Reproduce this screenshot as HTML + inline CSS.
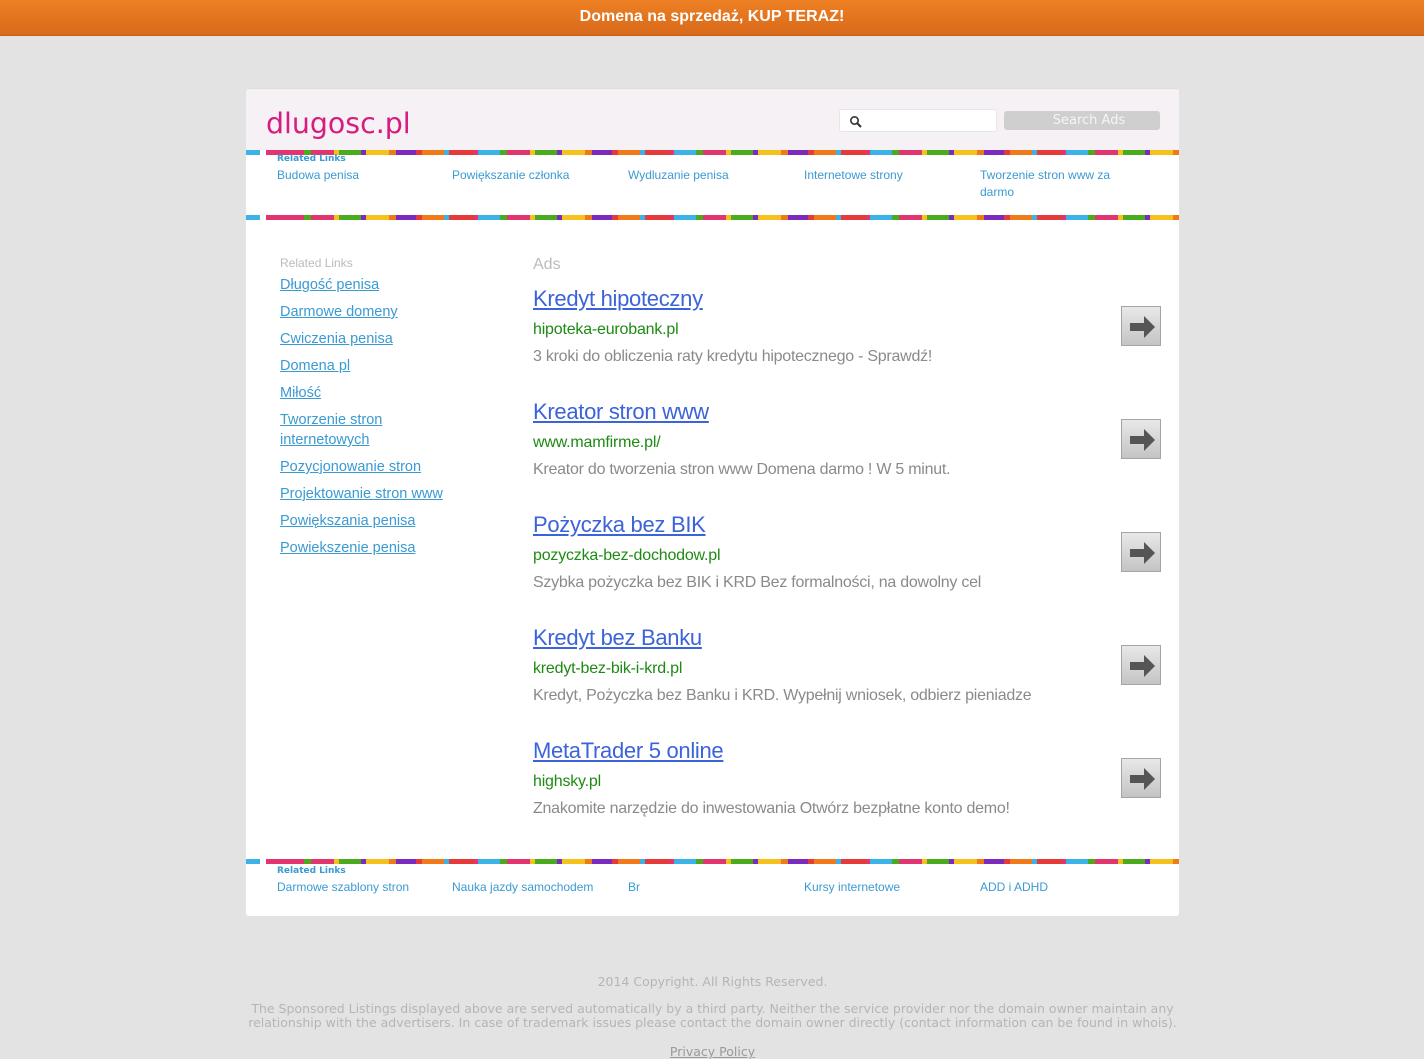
<!DOCTYPE html>
<html><head><meta charset="utf-8"><style>
*{margin:0;padding:0;box-sizing:border-box}
body{width:1424px;height:1059px;background:#e3e3e3;font-family:"Liberation Sans",Arial,sans-serif;position:relative;overflow:hidden}
.top{position:absolute;left:0;top:0;width:1424px;height:36px;background:linear-gradient(#ed8024,#d86a1a);border-bottom:1px solid #c55e16;color:#fff;font-weight:bold;font-size:16px;text-align:center;line-height:33px}
.box{position:absolute;left:246px;top:88px;width:933px;height:828px;background:#fff;border-radius:3px}
.head{position:absolute;left:0;top:0;width:933px;height:62px;background:#f5f1f4;border-radius:3px 3px 0 0;border-top:1px solid #ddd}
.logo{position:absolute;left:20px;top:18px;font-family:"DejaVu Sans",sans-serif;font-size:28.4px;color:#d71b7f}
.sin{position:absolute;left:593px;top:20px;width:158px;height:23px;background:#fff;border:1px solid #e6e6e6;border-radius:3px}
.sbtn{position:absolute;left:758px;top:22px;width:156px;height:19px;background:#cfcfcf;border-radius:3px;color:#f5f5f5;font-family:"DejaVu Sans",sans-serif;font-size:13px;text-align:center;line-height:19px;padding-left:14px}
.stripe{position:absolute;left:0;width:933px;height:5px;background:#fff}
.stripe i{position:absolute;left:0;top:0;width:58px;height:5px;background:linear-gradient(90deg,#3bb3e8 0 14px,#fff 14px 20px,#e0356e 20px 58px)}
.stripe b{position:absolute;left:58px;top:0;width:875px;height:5px;background:linear-gradient(90deg,#4aab1f 0 7px,#e0356e 7px 30px,#f5c11d 30px 35px,#4aab1f 35px 57px,#7a2bbd 57px 62px,#f5c11d 62px 85px,#f07a1a 85px 92px,#7a2bbd 92px 112px,#e5393a 112px 118px,#f07a1a 118px 140px,#3bb3e8 140px 145px,#e5393a 145px 170px,#e0356e 170px 174px,#3bb3e8 174px 196px);background-size:196px 5px;background-repeat:repeat-x}
.rl{position:absolute;left:31px;font-size:9px;font-weight:bold;color:#3a9ad2;font-family:"DejaVu Sans",sans-serif}
.tl{position:absolute;font-size:12px;color:#3a9ad2;line-height:17px;width:160px;font-family:"Liberation Sans",sans-serif}
.side{position:absolute;left:34px;top:168px}
.side .h{font-size:12px;color:#bbb;margin-bottom:5px}
.side a{display:block;font-size:14.5px;color:#3a9ad2;text-decoration:underline;line-height:20px;margin-bottom:7px;width:180px}
.ads{position:absolute;left:287px;top:168px}
.ads .h{font-size:16px;color:#bbb}
.ad{position:absolute;left:0;width:630px}
.ad .t{font-size:22px;color:#3b63da;text-decoration:underline;letter-spacing:-0.3px}
.ad .u{font-size:16px;color:#1e8a14;margin-top:9px;letter-spacing:-0.2px}
.ad .d{font-size:16px;color:#8a8a8a;margin-top:9px;letter-spacing:-0.25px}
.arr{position:absolute;left:875px;width:40px;height:40px;background:linear-gradient(#e8e8e8,#c4c4c4);border:1px solid #a5a5a5}
.foot{position:absolute;left:246px;width:933px;text-align:center;font-family:"DejaVu Sans",sans-serif;font-size:12.5px;color:#b5b5b5}
</style></head><body>
<div class="top">Domena na sprzedaż, KUP TERAZ!</div>
<div class="box">
<div class="head">
<div class="logo">dlugosc.pl</div>
<div class="sin"><svg width="14" height="14" style="position:absolute;left:9px;top:5px"><circle cx="5.5" cy="5.5" r="3.7" fill="none" stroke="#333" stroke-width="1.6"/><path d="M8 8l4 4" stroke="#333" stroke-width="2"/></svg></div>
<div class="sbtn">Search Ads</div>
</div>
<div class="stripe" style="top:62px"><i></i><b></b></div>
<div class="rl" style="top:66px">Related Links</div>
<div class="tl" style="left:31px;top:79px">Budowa penisa</div>
<div class="tl" style="left:206px;top:79px">Powiększanie członka</div>
<div class="tl" style="left:382px;top:79px">Wydluzanie penisa</div>
<div class="tl" style="left:558px;top:79px">Internetowe strony</div>
<div class="tl" style="left:734px;top:79px;width:150px">Tworzenie stron www za darmo</div>
<div class="stripe" style="top:127px"><i></i><b></b></div>
<div class="side"><div class="h">Related Links</div>
<a>Długość penisa</a><a>Darmowe domeny</a><a>Cwiczenia penisa</a><a>Domena pl</a><a>Miłość</a><a>Tworzenie stron internetowych</a><a>Pozycjonowanie stron</a><a>Projektowanie stron www</a><a>Powiększania penisa</a><a>Powiekszenie penisa</a></div>
<div class="ads"><div class="h">Ads</div></div>
<div class="ads" style="top:198px">
<div class="ad" style="top:0"><div class="t">Kredyt hipoteczny</div><div class="u">hipoteka-eurobank.pl</div><div class="d">3 kroki do obliczenia raty kredytu hipotecznego - Sprawdź!</div></div>
<div class="ad" style="top:113px"><div class="t">Kreator stron www</div><div class="u">www.mamfirme.pl/</div><div class="d">Kreator do tworzenia stron www Domena darmo ! W 5 minut.</div></div>
<div class="ad" style="top:226px"><div class="t">Pożyczka bez BIK</div><div class="u">pozyczka-bez-dochodow.pl</div><div class="d">Szybka pożyczka bez BIK i KRD Bez formalności, na dowolny cel</div></div>
<div class="ad" style="top:339px"><div class="t">Kredyt bez Banku</div><div class="u">kredyt-bez-bik-i-krd.pl</div><div class="d">Kredyt, Pożyczka bez Banku i KRD. Wypełnij wniosek, odbierz pieniadze</div></div>
<div class="ad" style="top:452px"><div class="t">MetaTrader 5 online</div><div class="u">highsky.pl</div><div class="d">Znakomite narzędzie do inwestowania Otwórz bezpłatne konto demo!</div></div>
</div>
<div class="arr" style="top:218px"><svg width="40" height="40"><path d="M8 16h14v-7l11 11-11 11v-7H8z" fill="#555"/></svg></div>
<div class="arr" style="top:331px"><svg width="40" height="40"><path d="M8 16h14v-7l11 11-11 11v-7H8z" fill="#555"/></svg></div>
<div class="arr" style="top:444px"><svg width="40" height="40"><path d="M8 16h14v-7l11 11-11 11v-7H8z" fill="#555"/></svg></div>
<div class="arr" style="top:557px"><svg width="40" height="40"><path d="M8 16h14v-7l11 11-11 11v-7H8z" fill="#555"/></svg></div>
<div class="arr" style="top:670px"><svg width="40" height="40"><path d="M8 16h14v-7l11 11-11 11v-7H8z" fill="#555"/></svg></div>
<div class="stripe" style="top:771px"><i></i><b></b></div>
<div class="rl" style="top:778px">Related Links</div>
<div class="tl" style="left:31px;top:791px">Darmowe szablony stron</div>
<div class="tl" style="left:206px;top:791px">Nauka jazdy samochodem</div>
<div class="tl" style="left:382px;top:791px">Br</div>
<div class="tl" style="left:558px;top:791px">Kursy internetowe</div>
<div class="tl" style="left:734px;top:791px">ADD i ADHD</div>
</div>
<div class="foot" style="top:974px">2014 Copyright. All Rights Reserved.</div>
<div class="foot" style="top:1002px;line-height:14px;left:240px;width:945px">The Sponsored Listings displayed above are served automatically by a third party. Neither the service provider nor the domain owner maintain any relationship with the advertisers. In case of trademark issues please contact the domain owner directly (contact information can be found in whois).</div>
<div class="foot" style="top:1044px;color:#999;text-decoration:underline">Privacy Policy</div>
</body></html>
